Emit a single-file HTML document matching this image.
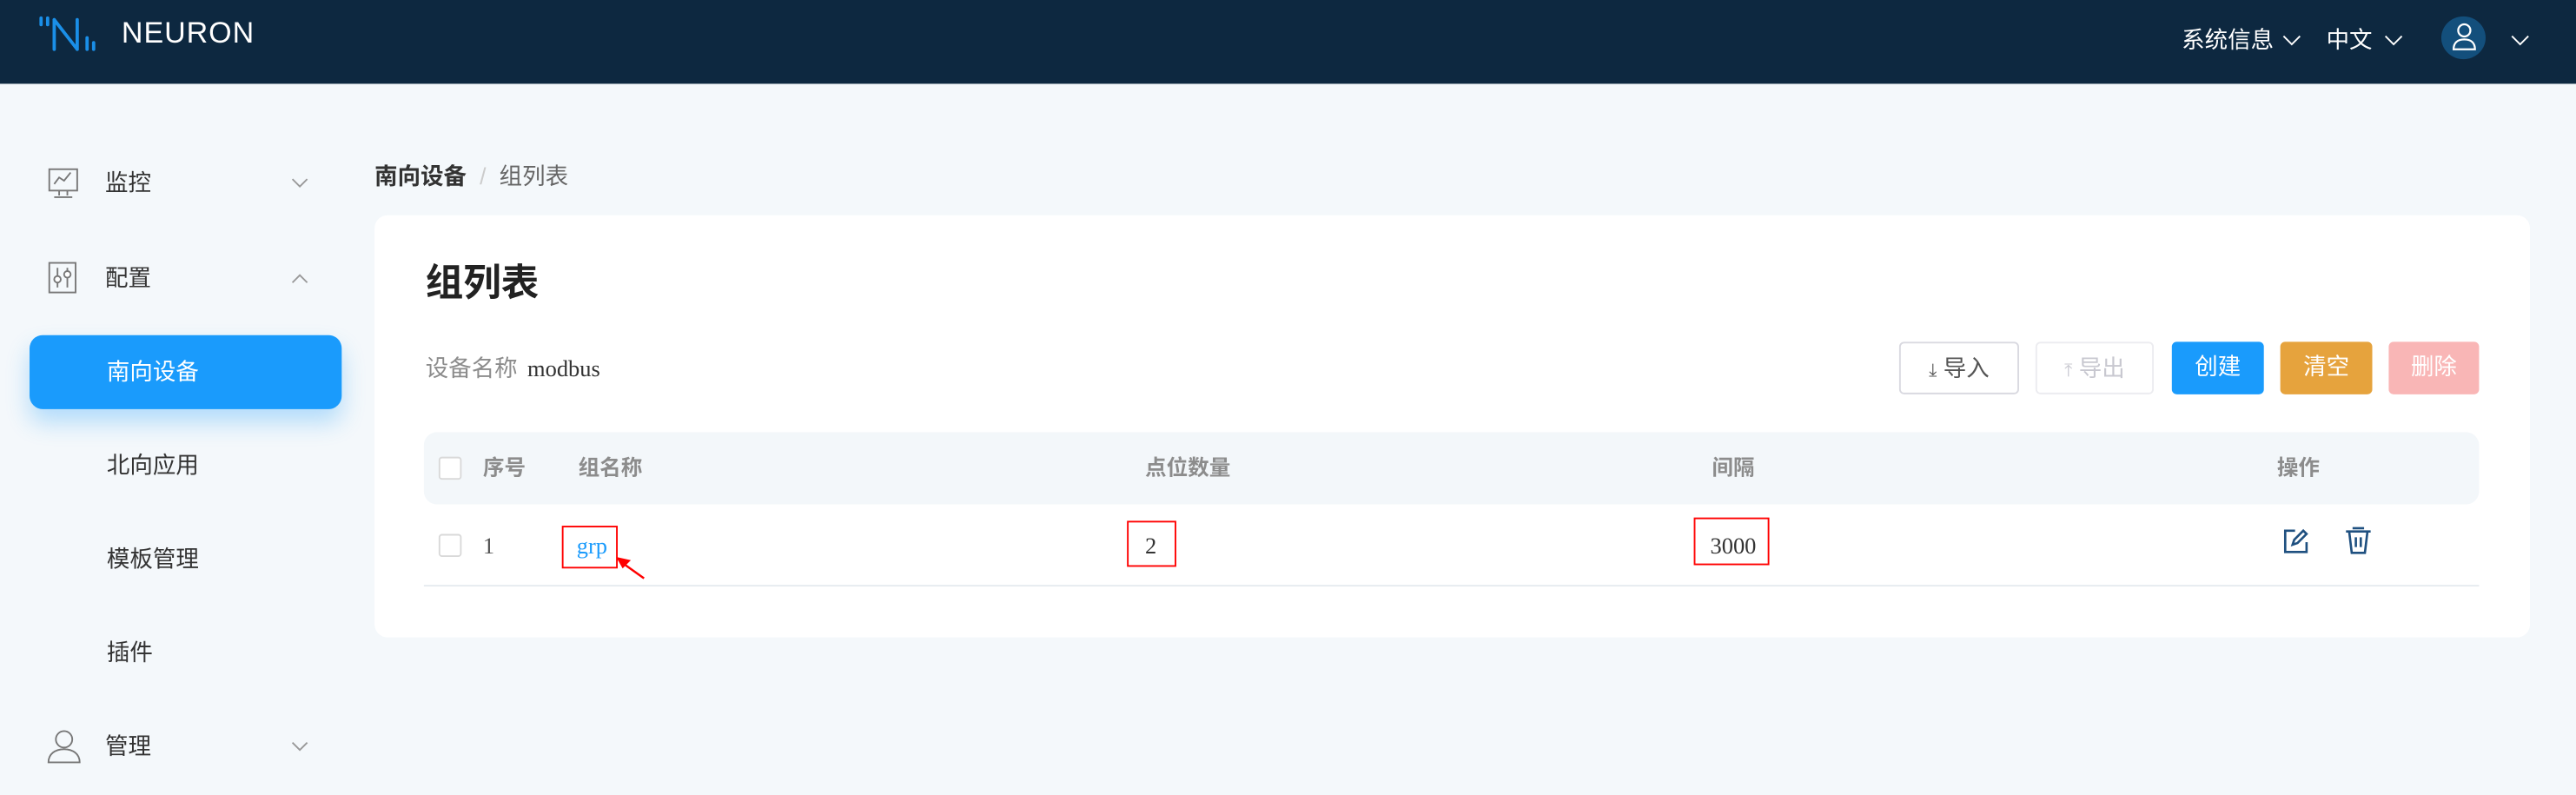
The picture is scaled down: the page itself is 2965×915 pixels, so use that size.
<!DOCTYPE html>
<html><head><meta charset="utf-8"><style>
*{margin:0;padding:0;box-sizing:border-box}
html,body{width:2965px;height:915px;overflow:hidden;background:#f4f8fb}
#s{width:1568px;height:484px;transform:scale(1.89094);transform-origin:0 0;position:relative;font-family:"Liberation Sans","Noto Sans CJK SC",sans-serif;background:#f4f8fb;line-height:20px}
.a{position:absolute;white-space:nowrap}
.hd{left:0;top:0;width:1568px;height:51px;background:#0d2840}
.w{color:#fff;font-size:14px}
.nav{font-size:14px;color:#333}
.btn{position:absolute;top:208px;height:32px;border-radius:3px;font-size:14px;line-height:30px;text-align:center;color:#fff}
.th{font-size:13px;color:#8c8c8c;font-weight:bold;top:275px}
.cb{width:14px;height:14px;border:1px solid #d9d9d9;border-radius:2px;background:#fff}
.rb{border:1.5px solid #f00}
.ser{font-family:"Liberation Serif",serif;font-size:14px}
</style></head><body><div id="s">
<div class="a hd"></div>
<svg class="a" style="left:18px;top:8px" width="46" height="26" viewBox="0 0 46 26"><g stroke="#1a8fe8" stroke-width="2" stroke-linecap="round" fill="none"><path d="M7 3v4M11 3v4M15 4v18M15 4l14 18M29 4v18M35 15v7M39 18v4"/></g></svg>
<div class="a w" style="left:74px;top:10px;font-size:18px;letter-spacing:0.5px">NEURON</div>
<div class="a w" style="left:1328px;top:14px">系统信息</div>
<svg class="a" style="left:1389px;top:21px" width="12" height="8"><path d="M1 1l5 5 5-5" stroke="#fff" fill="none"/></svg>
<div class="a w" style="left:1416px;top:14px">中文</div>
<svg class="a" style="left:1451px;top:21px" width="12" height="8"><path d="M1 1l5 5 5-5" stroke="#fff" fill="none"/></svg>
<div class="a" style="left:1486px;top:10px;width:27px;height:26px;border-radius:50%;background:#134f7c"></div>
<svg class="a" style="left:1490px;top:12px" width="20" height="20" viewBox="0 0 20 20"><circle cx="10" cy="6.5" r="3.7" stroke="#fff" fill="none" stroke-width="1.2"/><path d="M3.5 18c0-4 2.5-6 6.5-6s6.5 2 6.5 6z" stroke="#fff" fill="none" stroke-width="1.2"/></svg>
<svg class="a" style="left:1528px;top:21px" width="12" height="8"><path d="M1 1l5 5 5-5" stroke="#fff" fill="none"/></svg>

<svg class="a" style="left:29px;top:102px" width="20" height="20" viewBox="0 0 20 20" fill="none" stroke="#777"><rect x="1" y="1" width="17" height="13"/><path d="M4 10l3-4 3 2 4-5M7 14v3M12 14v3M4 18h11"/></svg>
<div class="a nav" style="left:64px;top:101px">监控</div>
<svg class="a" style="left:177px;top:108px" width="11" height="7"><path d="M1 1l4.5 4.5L10 1" stroke="#999" fill="none"/></svg>
<svg class="a" style="left:29px;top:159px" width="20" height="20" viewBox="0 0 20 20" fill="none" stroke="#777"><rect x="1" y="1" width="16" height="18"/><path d="M6 4v12M12 4v12"/><circle cx="6" cy="11" r="2" fill="#fff"/><circle cx="12" cy="8" r="2" fill="#fff"/></svg>
<div class="a nav" style="left:64px;top:159px">配置</div>
<svg class="a" style="left:177px;top:166px" width="11" height="7"><path d="M1 6l4.5-4.5L10 6" stroke="#999" fill="none"/></svg>
<div class="a" style="left:18px;top:204px;width:190px;height:45px;background:#1a9bfc;border-radius:8px;box-shadow:0 8px 14px rgba(26,155,252,.3)"></div>
<div class="a w" style="left:65px;top:216px">南向设备</div>
<div class="a nav" style="left:65px;top:273px">北向应用</div>
<div class="a nav" style="left:65px;top:330px">模板管理</div>
<div class="a nav" style="left:65px;top:387px">插件</div>
<svg class="a" style="left:28px;top:443px" width="22" height="22" viewBox="0 0 22 22" fill="none" stroke="#777"><circle cx="11" cy="7" r="5"/><path d="M1.5 21c0-5 4-8 9.5-8s9.5 3 9.5 8z"/></svg>
<div class="a nav" style="left:64px;top:444px">管理</div>
<svg class="a" style="left:177px;top:451px" width="11" height="7"><path d="M1 1l4.5 4.5L10 1" stroke="#999" fill="none"/></svg>

<div class="a" style="left:228px;top:97px;font-size:14px;color:#333;font-weight:bold">南向设备<span style="color:#ccc;font-weight:normal;margin:0 8px">/</span><span style="color:#666;font-weight:normal">组列表</span></div>
<div class="a" style="left:228px;top:131px;width:1312px;height:257px;background:#fff;border-radius:8px"></div>
<div class="a" style="left:259px;top:157px;font-size:23px;line-height:30px;font-weight:bold;color:#222">组列表</div>
<div class="a" style="left:259px;top:214px;font-size:14px;color:#8c8c8c">设备名称</div>
<div class="a ser" style="left:321px;top:216px;color:#333">modbus</div>
<div class="btn" style="left:1156px;width:73px;border:1px solid #d9d9e0;background:#fff;color:#555"><span style="font-size:11px">⤓</span> 导入</div>
<div class="btn" style="left:1239px;width:72px;border:1px solid #ececf0;background:#fff;color:#c8c8d0"><span style="font-size:11px">⤒</span> 导出</div>
<div class="btn" style="left:1322px;width:56px;background:#1a9bfc;line-height:31px">创建</div>
<div class="btn" style="left:1388px;width:56px;background:#e6a33d;line-height:31px">清空</div>
<div class="btn" style="left:1454px;width:55px;background:#f9b6b6;line-height:31px">删除</div>

<div class="a" style="left:258px;top:263px;width:1251px;height:44px;background:#f3f7fa;border-radius:8px"></div>
<div class="a cb" style="left:267px;top:278px"></div>
<div class="a th" style="left:294px">序号</div>
<div class="a th" style="left:352px">组名称</div>
<div class="a th" style="left:697px">点位数量</div>
<div class="a th" style="left:1042px">间隔</div>
<div class="a th" style="left:1386px">操作</div>
<div class="a cb" style="left:267px;top:325px"></div>
<div class="a ser" style="left:294px;top:324px;color:#555">1</div>
<div class="a rb" style="left:342px;top:320px;width:34px;height:26px"></div>
<div class="a ser" style="left:351px;top:324px;color:#1a9bfc">grp</div>
<svg class="a" style="left:374px;top:338px" width="22" height="16"><path d="M18 14L4 4" stroke="#f00" stroke-width="1.3"/><path d="M1 1l9 2-5 5z" fill="#f00"/></svg>
<div class="a rb" style="left:686px;top:317px;width:30px;height:28px"></div>
<div class="a ser" style="left:697px;top:324px;color:#333">2</div>
<div class="a rb" style="left:1031px;top:315px;width:46px;height:29px"></div>
<div class="a ser" style="left:1041px;top:324px;color:#333">3000</div>
<div class="a" style="left:258px;top:356px;width:1251px;height:1px;background:#e6ebf0"></div>
<svg class="a" style="left:1389px;top:321px" width="17" height="17" viewBox="0 0 17 17" fill="none" stroke="#1f5080" stroke-width="1.4"><path d="M8 2H2v13h13V9"/><path d="M6.5 10.5l1-3L13 2l2 2-5.5 5.5z"/></svg>
<svg class="a" style="left:1427px;top:320px" width="17" height="18" viewBox="0 0 17 18" fill="none" stroke="#1f5080" stroke-width="1.4"><path d="M5 1.5h7M1 3.5h15M3 4l1.5 12.5h8L14 4M7 7v6M10 7v6"/></svg>
</div></body></html>
